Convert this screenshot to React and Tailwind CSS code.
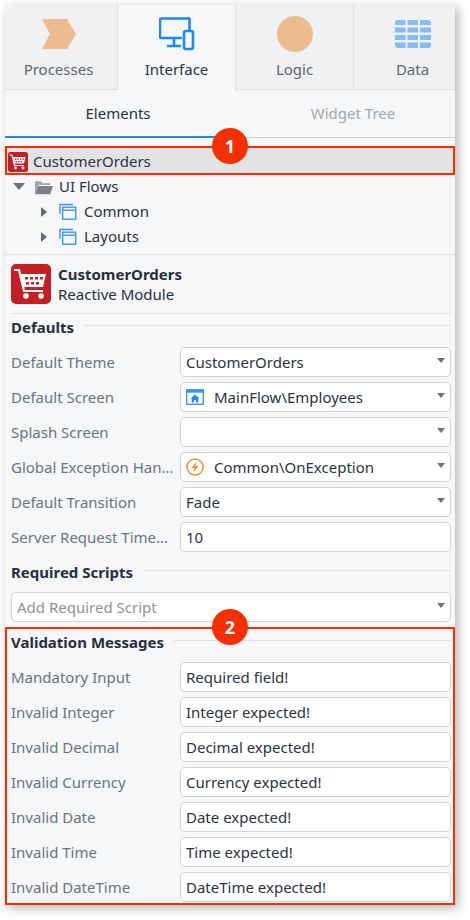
const font = { fontFamily: '"Noto Sans", sans-serif' }

function Caret() {
  return (
    <svg width="8" height="5" viewBox="0 0 8 5" className="mb-[3px] shrink-0">
      <path d="M0 0h8L4 5z" fill="#6b7280" />
    </svg>
  )
}

function TreeArrow({ down }) {
  if (down) {
    return (
      <svg width="12" height="10" viewBox="0 0 12 10" className="shrink-0">
        <path d="M0 1h12L6 8z" fill="#6b7280" />
      </svg>
    )
  }
  return (
    <svg width="10" height="10" viewBox="0 0 10 10" className="shrink-0">
      <path d="M2 0l6 5-6 5z" fill="#5f6b7a" />
    </svg>
  )
}

function CartIcon({ size }) {
  return (
    <svg width={size} height={size} viewBox="0 0 40 40" className="shrink-0">
      <rect width="40" height="40" rx="5" fill="#c41f24" />
      <path d="M3 6h5l5 21h19" fill="none" stroke="#fff" strokeWidth="2.2" />
      <path d="M9 10h26l-3 13H13z" fill="#fff" />
      <g fill="#c41f24">
        <rect x="14" y="13" width="3" height="2.5" />
        <rect x="19" y="13" width="3" height="2.5" />
        <rect x="24" y="13" width="3" height="2.5" />
        <rect x="29" y="13" width="3" height="2.5" />
        <rect x="15" y="18" width="3" height="2.5" />
        <rect x="20" y="18" width="3" height="2.5" />
        <rect x="25" y="18" width="3" height="2.5" />
      </g>
      <circle cx="15" cy="32" r="2.8" fill="#fff" />
      <circle cx="30" cy="32" r="2.8" fill="#fff" />
    </svg>
  )
}

function FlowIcon() {
  return (
    <svg width="18" height="18" viewBox="0 0 18 18" fill="none" stroke="#3d95ef" strokeWidth="1.4">
      <path d="M1 11V1.500h13" />
      <rect x="3.700" y="4.200" width="13" height="12" />
      <path d="M3.700 7.200h13" />
    </svg>
  )
}

// the four tabs are wider than the panel, so the last one gets clipped
function Tab({ label, active, children }) {
  return (
    <div
      className={`flex w-[118px] shrink-0 flex-col items-center border-r border-[#dfe1e4] pt-[11px] ${
        active ? 'bg-[#f6f7f9]' : 'border-b bg-[#f0f1f3]'
      }`}
    >
      <div className="flex h-[36px] items-center justify-center">{children}</div>
      <span className={`mt-[7px] text-[15px] leading-[20px] ${active ? 'text-[#2a3442]' : 'text-[#5f6672]'}`}>{label}</span>
    </div>
  )
}

function Box({ children, select }) {
  return (
    <div className="flex h-[30px] min-w-0 flex-1 items-center rounded-[5px] border border-[#d0d2d6] bg-white pl-[5px] pr-[5px] text-[15px] text-[#2a3442]">
      <div className="flex min-w-0 flex-1 items-center">{children}</div>
      {select && <Caret />}
    </div>
  )
}

function Row({ label, select, children }) {
  return (
    <div className="flex h-[30px] items-center">
      <div className="w-[169px] shrink-0 whitespace-nowrap text-[15px] text-[#6b7480]">{label}</div>
      <Box select={select}>{children}</Box>
    </div>
  )
}

function Heading({ children }) {
  return (
    <div className="flex h-[20px] items-center text-[15px] font-bold text-[#26303c]">
      <span>{children}</span>
      <span className="mb-[3px] ml-[10px] h-px flex-1 bg-[#dfe1e4]" />
    </div>
  )
}

function Badge({ n, className }) {
  return (
    <div className={`absolute flex h-[36px] w-[36px] items-center justify-center rounded-full bg-[#f52f00] text-[18px] font-bold text-white ${className}`}>
      {n}
    </div>
  )
}

const messages = [
  ['Mandatory Input', 'Required field!'],
  ['Invalid Integer', 'Integer expected!'],
  ['Invalid Decimal', 'Decimal expected!'],
  ['Invalid Currency', 'Currency expected!'],
  ['Invalid Date', 'Date expected!'],
  ['Invalid Time', 'Time expected!'],
  ['Invalid DateTime', 'DateTime expected!'],
]

export default function App() {
  return (
    <div className="h-[920px] w-[470px] overflow-hidden bg-white pl-[5px] pt-[5px]" style={font}>
      <div className="relative h-[900px] w-[450px] overflow-hidden bg-[#f6f7f9]">
        <div className="-ml-[5px] flex h-[85px]">
          <Tab label="Processes">
            <svg width="34" height="30" viewBox="0 0 34 30">
              <path d="M0 0h25l9 15-9 15H0l8-15z" fill="#edbb8e" />
            </svg>
          </Tab>
          <Tab label="Interface" active>
            <svg width="36" height="34" viewBox="0 0 36 34" fill="none" stroke="#1f88f2" strokeWidth="2.6">
              <path d="M23 21H2.500a1.500 1.500 0 0 1-1.500-1.500V3a1.500 1.500 0 0 1 1.500-1.500h25.500A1.500 1.500 0 0 1 30.500 3v10" />
              <path d="M15 21v7M8 29h14" />
              <rect x="25" y="14" width="9" height="18" rx="2" />
            </svg>
          </Tab>
          <Tab label="Logic">
            <div className="h-[36px] w-[36px] rounded-full bg-[#edbb8e]" />
          </Tab>
          <Tab label="Data">
            <svg width="36" height="28" viewBox="0 0 36 28" fill="#85bcf3">
              <path d="M0 3a3 3 0 0 1 3-3h7.500v5H0zM12.500 0h10.500v5H12.500zM25 0h8a3 3 0 0 1 3 3v2H25z" />
              <path d="M0 7.500h10.500v5H0zM12.500 7.500h10.500v5H12.500zM25 7.500h11v5H25z" />
              <path d="M0 15h10.500v5H0zM12.500 15h10.500v5H12.500zM25 15h11v5H25z" />
              <path d="M0 22.500h10.500V28H3a3 3 0 0 1-3-3zM12.500 22.500h10.500V28H12.500zM25 22.500h11V25a3 3 0 0 1-3 3h-8z" />
            </svg>
          </Tab>
        </div>

        <div className="-ml-[5px] flex h-[48px] text-[15px]">
          <div className="flex w-[236px] shrink-0 items-center justify-center border-b-2 border-[#1f88f2] text-[#2a3442]">Elements</div>
          <div className="flex w-[234px] shrink-0 items-center justify-center border-b border-[#cfd1d5] text-[#a3a7ae]">Widget Tree</div>
        </div>

        <div className="mt-[10px] flex h-[27px] items-center gap-[5px] bg-[#e2e3e5] pl-[3px] text-[15px] text-[#2a3442]">
          <CartIcon size={20} />
          <span>CustomerOrders</span>
        </div>
        <div className="-mt-px text-[15px] text-[#2a3442]">
          <div className="flex h-[25px] items-center pl-[8px]">
            <TreeArrow down />
            <svg width="19" height="16" viewBox="0 0 20 16" className="ml-[9px] mr-[6px] shrink-0">
              <path d="M1 15V2h6l2 2h8v2H5L1 15z" fill="#a3a6ab" />
              <path d="M4.500 7H20l-3 8.500H1z" fill="#7d8085" />
            </svg>
            <span>UI Flows</span>
          </div>
          {['Common', 'Layouts'].map((name) => (
            <div key={name} className="flex h-[25px] items-center pl-[34px]">
              <TreeArrow />
              <span className="ml-[10px] mr-[7px] flex"><FlowIcon /></span>
              <span>{name}</span>
            </div>
          ))}
        </div>

        <div className="mt-[5px] border-t border-[#dfe1e4] px-[6px] pt-[9px]">
          <div className="flex h-[40px] items-center gap-[7px]">
            <CartIcon size={40} />
            <div className="text-[15px] leading-[20px] text-[#26303c]">
              <div className="font-bold">CustomerOrders</div>
              <div>Reactive Module</div>
            </div>
          </div>
        </div>

        <div className="pl-[6px] pr-[4px]">
          <div className="mt-[9px] border-t border-[#dfe1e4] pt-[3px]"><Heading>Defaults</Heading></div>
          <div className="mt-[10px] flex flex-col gap-[5px]">
            <Row label="Default Theme" select>CustomerOrders</Row>
            <Row label="Default Screen" select>
              <svg width="18" height="16" viewBox="0 0 18 16" className="mr-[10px] shrink-0">
                <rect x="0.700" y="0.700" width="16.600" height="14.600" fill="none" stroke="#3d95ef" strokeWidth="1.400" />
                <rect x="0.700" y="0.700" width="16.600" height="3" fill="#3d95ef" />
                <path d="M9 5.500l4.500 4h-1.200v4H10v-2.500H8v2.500H5.700v-4H4.500z" fill="#1f88f2" />
              </svg>
              MainFlow\Employees
            </Row>
            <Row label="Splash Screen" select />
            <Row label="Global Exception Han…" select>
              <svg width="18" height="18" viewBox="0 0 18 18" className="mr-[10px] shrink-0">
                <circle cx="9" cy="9" r="8" fill="none" stroke="#ee8f3c" strokeWidth="1.500" />
                <path d="M10.500 3.500L5.500 10h3l-1 4.500 5-6.500h-3z" fill="#ee8f3c" />
              </svg>
              Common\OnException
            </Row>
            <Row label="Default Transition" select>Fade</Row>
            <Row label="Server Request Time…">10</Row>
          </div>

          <div className="mt-[10px]"><Heading>Required Scripts</Heading></div>
          <div className="mt-[10px] flex">
            <Box select><span className="text-[#8f949b]">Add Required Script</span></Box>
          </div>

          <div className="mt-[10px]"><Heading>Validation Messages</Heading></div>
          <div className="mt-[10px] flex flex-col gap-[5px]">
            {messages.map(([label, value]) => (
              <Row key={label} label={label}>{value}</Row>
            ))}
          </div>
        </div>

        {/* callouts */}
        <div className="absolute left-0 top-[141px] h-[29px] w-[450px] border-2 border-[#f52f00]" />
        <div className="absolute left-0 top-[622px] h-[278px] w-[450px] border-2 border-[#f52f00]" />
        <Badge n="1" className="left-[207px] top-[123px]" />
        <Badge n="2" className="left-[207px] top-[604px]" />
      </div>
      <div className="pointer-events-none absolute left-[5px] top-[5px] h-[900px] w-[450px] shadow-[3px_3px_10px_rgba(0,0,0,0.3)]" />
    </div>
  )
}
